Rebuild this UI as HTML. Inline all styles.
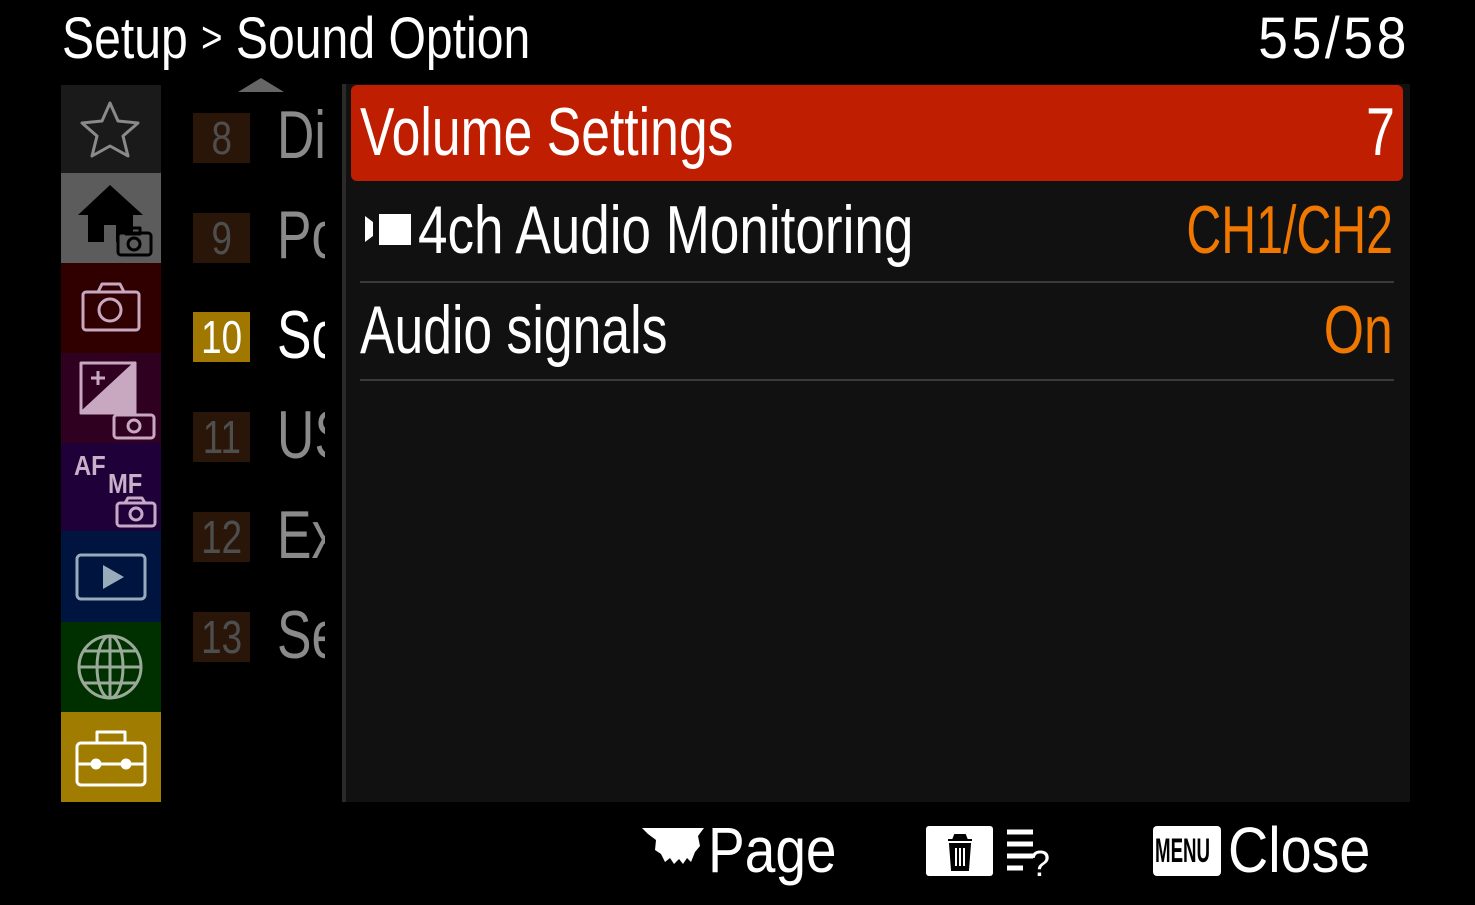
<!DOCTYPE html>
<html><head><meta charset="utf-8"><style>
*{margin:0;padding:0;box-sizing:border-box}
body{width:1475px;height:905px;background:#000;overflow:hidden;position:relative;font-family:"Liberation Sans",sans-serif;color:#fff}
.a{position:absolute}
.t{position:absolute;white-space:nowrap;transform:scaleX(0.76);transform-origin:0 0;line-height:1}
.tr{position:absolute;white-space:nowrap;transform:scaleX(0.76);transform-origin:100% 0;line-height:1}
.tile{position:absolute;left:61px;width:100px}
.num{position:absolute;left:193px;width:57px;height:50px;background:#2a1608;color:#4e4e4e;font-size:46px;text-align:center;line-height:50px}
.num span{display:inline-block;transform:scaleX(0.8)}
.lab{position:absolute;left:277px;width:48px;overflow:hidden;height:70px}
.lab span{display:block;font-size:68px;color:#8a8a8a;transform:scaleX(0.76);transform-origin:0 0;white-space:nowrap;line-height:70px}
</style></head><body>
<div class="t" style="left:62px;top:10px;font-size:58px;transform:scaleX(0.83)">Setup <span style="font-size:44px;position:relative;top:-6px">&gt;</span> Sound Option</div>
<div class="tr" style="right:65px;top:10px;font-size:58px;transform:scaleX(0.92);letter-spacing:4px">55/58</div>

<div class="tile" style="top:85px;height:88px;background:#1a1a1a"></div>
<div class="tile" style="top:173px;height:90px;background:#5c5c5c"></div>
<div class="tile" style="top:263px;height:90px;background:#300000"></div>
<div class="tile" style="top:353px;height:90px;background:#300020"></div>
<div class="tile" style="top:443px;height:88px;background:#200038"></div>
<div class="tile" style="top:531px;height:91px;background:#001440"></div>
<div class="tile" style="top:622px;height:90px;background:#003000"></div>
<div class="tile" style="top:712px;height:90px;background:#a07c00"></div>
<svg class="a" style="left:61px;top:85px" width="100" height="717" fill="none" stroke-linejoin="round">
<polygon points="49,18 57,36 77,38 62,51 67,71 49,61 31,71 36,51 21,38 41,36" stroke="#8a8a8a" stroke-width="3"/>
<polygon points="49,100 82,130 72,130 72,157 55,157 55,140 43,140 43,157 27,157 27,130 17,130" fill="#000"/>
<g stroke="#000" stroke-width="3"><rect x="57" y="148" width="33" height="22" rx="3" fill="#5c5c5c"/><circle cx="73" cy="159" r="6"/><rect x="65" y="143" width="14" height="6"/></g>
<g stroke="#c8a8c0" stroke-width="3"><rect x="22" y="207" width="56" height="38" rx="3"/><path d="M37 207 l4 -8 h18 l4 8"/><circle cx="49" cy="225" r="11"/></g>
<g stroke="#c8a8c0" stroke-width="3"><rect x="20" y="278" width="54" height="50"/><polygon points="74,278 74,328 20,328" fill="#c8a8c0"/><path d="M30 293 h14 M37 286 v14"/>
<rect x="53" y="330" width="40" height="23" rx="3" fill="#300020"/><circle cx="73" cy="341" r="6"/></g>
<text x="13" y="390" fill="#c8b0c8" font-family="Liberation Sans" font-weight="bold" font-size="28" transform="scale(0.85,1)" transform-origin="13 390">AF</text>
<text x="47" y="408" fill="#c8b0c8" font-family="Liberation Sans" font-weight="bold" font-size="28" transform="scale(0.85,1)" transform-origin="47 408">MF</text>
<g stroke="#c8a8c8" stroke-width="3"><rect x="56" y="418" width="38" height="23" rx="3"/><circle cx="75" cy="429" r="6"/><path d="M64 418 l3 -5 h14 l3 5"/></g>
<rect x="16" y="470" width="68" height="44" rx="4" stroke="#9ab" stroke-width="3"/><polygon points="42,480 42,504 63,492" fill="#9ab"/>
<g stroke="#99aa99" stroke-width="3"><circle cx="49" cy="582" r="31"/><ellipse cx="49" cy="582" rx="13" ry="31"/><path d="M18 582 h62 M22 566 h54 M22 598 h54 M49 551 v62"/></g>
<g stroke="#fff" stroke-width="3"><rect x="16" y="658" width="68" height="42" rx="4"/><path d="M36 658 v-11 h28 v11 M16 679 h68"/><circle cx="35" cy="679" r="4" fill="#fff"/><circle cx="65" cy="679" r="4" fill="#fff"/></g>
</svg>

<svg class="a" style="left:238px;top:78px" width="46" height="14"><polygon points="0,14 23,0 46,14" fill="#666"/></svg>

<div class="num" style="top:113px"><span>8</span></div>
<div class="num" style="top:213px"><span>9</span></div>
<div class="num" style="top:312px;background:#a07800;color:#fff"><span>10</span></div>
<div class="num" style="top:412px"><span>11</span></div>
<div class="num" style="top:512px"><span>12</span></div>
<div class="num" style="top:612px"><span>13</span></div>
<div class="lab" style="top:100px"><span>Di</span></div>
<div class="lab" style="top:200px"><span>Po</span></div>
<div class="lab" style="top:300px"><span style="color:#fff">So</span></div>
<div class="lab" style="top:400px"><span>US</span></div>
<div class="lab" style="top:500px"><span>Ex</span></div>
<div class="lab" style="top:600px"><span>Se</span></div>

<div class="a" style="left:342px;top:84px;width:1068px;height:718px;background:#111;border-left:4px solid #2a2a2a"></div>
<div class="a" style="left:351px;top:85px;width:1052px;height:96px;background:#c01e00;border-radius:6px"></div>
<div class="a" style="left:360px;top:281px;width:1034px;height:2px;background:#3a3a3a"></div>
<div class="a" style="left:360px;top:379px;width:1034px;height:2px;background:#3a3a3a"></div>

<div class="t" style="left:360px;top:98px;font-size:68px">Volume Settings</div>
<div class="tr" style="right:80px;top:98px;font-size:68px">7</div>
<svg class="a" style="left:365px;top:212px" width="50" height="34"><polygon points="0,4 8,10 8,24 0,30" fill="#fff"/><rect x="14" y="2" width="32" height="31" fill="#fff"/></svg>
<div class="t" style="left:418px;top:196px;font-size:68px;transform:scaleX(0.78)">4ch Audio Monitoring</div>
<div class="tr" style="right:82px;top:196px;font-size:68px;color:#f07800;transform:scaleX(0.71)">CH1/CH2</div>
<div class="t" style="left:360px;top:296px;font-size:68px">Audio signals</div>
<div class="tr" style="right:82px;top:296px;font-size:68px;color:#f07800">On</div>

<svg class="a" style="left:640px;top:826px" width="68" height="44"><path d="M2 2 h62 l-6 8 l2 10 l-5 6 l-4 10 l-4 -4 l-4 6 l-4 -5 l-5 5 l-4 -6 l-5 4 l-4 -8 l-6 -4 l1 -10 l-8 -6z" fill="#fff"/></svg>
<div class="t" style="left:708px;top:818px;font-size:64px;transform:scaleX(0.86)">Page</div>
<svg class="a" style="left:924px;top:826px" width="140" height="54"><rect x="2" y="0" width="67" height="50" rx="3" fill="#fff"/><path d="M24 14 h24 M29 14 l2 -5 h10 l2 5 M26 18 h20 l-2 26 h-16z" fill="#000" stroke="#000" stroke-width="2"/><path d="M32 22 v18 M36 22 v18 M40 22 v18" stroke="#fff" stroke-width="2"/><path d="M83 6 h26 M83 18 h26 M83 30 h26 M83 42 h16" stroke="#fff" stroke-width="5"/><text x="106" y="50" fill="#fff" font-family="Liberation Sans" font-size="36">?</text></svg>
<div class="a" style="left:1153px;top:826px;width:68px;height:50px;background:#fff;border-radius:4px;color:#000;font-weight:bold;font-size:34px;line-height:50px;overflow:hidden"><span style="display:inline-block;transform:scaleX(0.55);transform-origin:0 0;margin-left:2px">MENU</span></div>
<div class="t" style="left:1228px;top:818px;font-size:64px;transform:scaleX(0.87)">Close</div>
</body></html>
